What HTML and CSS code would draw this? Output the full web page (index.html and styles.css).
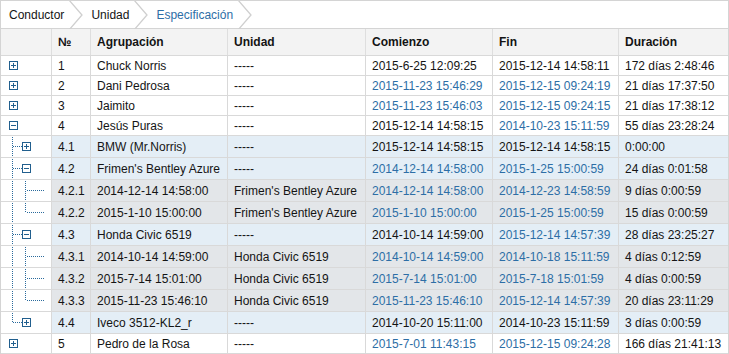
FILE: index.html
```html
<!DOCTYPE html>
<html>
<head>
<meta charset="utf-8">
<link rel="stylesheet" href="styles.css">
</head>
<body>
<div class="widget">
  <div class="crumbs">
    <div class="crumb"><span class="crumb-text">Conductor</span><svg class="chev" width="14" height="28" viewBox="0 0 14 28"><polyline points="0,-1 13,14 0,29"/></svg></div>
    <div class="crumb"><span class="crumb-text">Unidad</span><svg class="chev" width="14" height="28" viewBox="0 0 14 28"><polyline points="0,-1 13,14 0,29"/></svg></div>
    <div class="crumb"><span class="crumb-text active">Especificación</span><svg class="chev" width="14" height="28" viewBox="0 0 14 28"><polyline points="0,-1 13,14 0,29"/></svg></div>
  </div>

  <div class="row head">
    <div class="c"></div><div class="c">№</div><div class="c">Agrupación</div><div class="c">Unidad</div><div class="c">Comienzo</div><div class="c">Fin</div><div class="c">Duración</div>
  </div>

  <div class="row top">
    <div class="c t"><svg class="tree" width="50" height="19"><rect x="8.5" y="5.5" width="8" height="8"/><path class="sign" d="M10 9.5h5M12.5 7v5"/></svg></div>
    <div class="c">1</div><div class="c">Chuck Norris</div><div class="c">-----</div><div class="c">2015-6-25 12:09:25</div><div class="c">2015-12-14 14:58:11</div><div class="c">172 días 2:48:46</div>
  </div>
  <div class="row top">
    <div class="c t"><svg class="tree" width="50" height="19"><rect x="8.5" y="5.5" width="8" height="8"/><path class="sign" d="M10 9.5h5M12.5 7v5"/></svg></div>
    <div class="c">2</div><div class="c">Dani Pedrosa</div><div class="c">-----</div><div class="c b">2015-11-23 15:46:29</div><div class="c b">2015-12-15 09:24:19</div><div class="c">21 días 17:37:50</div>
  </div>
  <div class="row top">
    <div class="c t"><svg class="tree" width="50" height="19"><rect x="8.5" y="5.5" width="8" height="8"/><path class="sign" d="M10 9.5h5M12.5 7v5"/></svg></div>
    <div class="c">3</div><div class="c">Jaimito</div><div class="c">-----</div><div class="c b">2015-11-23 15:46:03</div><div class="c b">2015-12-15 09:24:15</div><div class="c">21 días 17:38:12</div>
  </div>
  <div class="row top">
    <div class="c t"><svg class="tree" width="50" height="19"><rect x="8.5" y="5.5" width="8" height="8"/><path class="sign" d="M10 9.5h5"/></svg></div>
    <div class="c">4</div><div class="c">Jesús Puras</div><div class="c">-----</div><div class="c">2015-12-14 14:58:15</div><div class="c b">2014-10-23 15:11:59</div><div class="c">55 días 23:28:24</div>
  </div>

  <div class="row l2">
    <div class="c t"><svg class="tree" width="50" height="21"><path class="dot" d="M11.5 1v20M12 10.5h9"/><rect x="21.5" y="6.5" width="8" height="8"/><path class="sign" d="M23 10.5h5M25.5 8v5"/></svg></div>
    <div class="c">4.1</div><div class="c">BMW (Mr.Norris)</div><div class="c">-----</div><div class="c">2015-12-14 14:58:15</div><div class="c">2015-12-14 14:58:15</div><div class="c">0:00:00</div>
  </div>
  <div class="row l2">
    <div class="c t"><svg class="tree" width="50" height="21"><path class="dot" d="M11.5 1v20M12 10.5h9"/><rect x="21.5" y="6.5" width="8" height="8"/><path class="sign" d="M23 10.5h5"/></svg></div>
    <div class="c">4.2</div><div class="c">Frimen's Bentley Azure</div><div class="c">-----</div><div class="c b">2014-12-14 14:58:00</div><div class="c b">2015-1-25 15:00:59</div><div class="c">24 días 0:01:58</div>
  </div>
  <div class="row l3">
    <div class="c t"><svg class="tree" width="50" height="21"><path class="dot" d="M11.5 1v20M24.5 1v20M26 10.5h18"/></svg></div>
    <div class="c">4.2.1</div><div class="c">2014-12-14 14:58:00</div><div class="c">Frimen's Bentley Azure</div><div class="c b">2014-12-14 14:58:00</div><div class="c b">2014-12-23 14:58:59</div><div class="c">9 días 0:00:59</div>
  </div>
  <div class="row l3">
    <div class="c t"><svg class="tree" width="50" height="21"><path class="dot" d="M11.5 1v20M24.5 1v10M26 10.5h18"/></svg></div>
    <div class="c">4.2.2</div><div class="c">2015-1-10 15:00:00</div><div class="c">Frimen's Bentley Azure</div><div class="c b">2015-1-10 15:00:00</div><div class="c b">2015-1-25 15:00:59</div><div class="c">15 días 0:00:59</div>
  </div>
  <div class="row l2">
    <div class="c t"><svg class="tree" width="50" height="21"><path class="dot" d="M11.5 1v20M12 10.5h9"/><rect x="21.5" y="6.5" width="8" height="8"/><path class="sign" d="M23 10.5h5"/></svg></div>
    <div class="c">4.3</div><div class="c">Honda Civic 6519</div><div class="c">-----</div><div class="c">2014-10-14 14:59:00</div><div class="c b">2015-12-14 14:57:39</div><div class="c">28 días 23:25:27</div>
  </div>
  <div class="row l3">
    <div class="c t"><svg class="tree" width="50" height="21"><path class="dot" d="M11.5 1v20M24.5 1v20M26 10.5h18"/></svg></div>
    <div class="c">4.3.1</div><div class="c">2014-10-14 14:59:00</div><div class="c">Honda Civic 6519</div><div class="c b">2014-10-14 14:59:00</div><div class="c b">2014-10-18 15:11:59</div><div class="c">4 días 0:12:59</div>
  </div>
  <div class="row l3">
    <div class="c t"><svg class="tree" width="50" height="21"><path class="dot" d="M11.5 1v20M24.5 1v20M26 10.5h18"/></svg></div>
    <div class="c">4.3.2</div><div class="c">2015-7-14 15:01:00</div><div class="c">Honda Civic 6519</div><div class="c b">2015-7-14 15:01:00</div><div class="c b">2015-7-18 15:01:59</div><div class="c">4 días 0:00:59</div>
  </div>
  <div class="row l3">
    <div class="c t"><svg class="tree" width="50" height="21"><path class="dot" d="M11.5 1v20M24.5 1v10M26 10.5h18"/></svg></div>
    <div class="c">4.3.3</div><div class="c">2015-11-23 15:46:10</div><div class="c">Honda Civic 6519</div><div class="c b">2015-11-23 15:46:10</div><div class="c b">2015-12-14 14:57:39</div><div class="c">20 días 23:11:29</div>
  </div>
  <div class="row l2">
    <div class="c t"><svg class="tree" width="50" height="21"><path class="dot" d="M11.5 1v10M12 10.5h9"/><rect x="21.5" y="6.5" width="8" height="8"/><path class="sign" d="M23 10.5h5M25.5 8v5"/></svg></div>
    <div class="c">4.4</div><div class="c">Iveco 3512-KL2_r</div><div class="c">-----</div><div class="c">2014-10-20 15:11:00</div><div class="c">2014-10-23 15:11:59</div><div class="c">3 días 0:00:59</div>
  </div>

  <div class="row top">
    <div class="c t"><svg class="tree" width="50" height="19"><rect x="8.5" y="5.5" width="8" height="8"/><path class="sign" d="M10 9.5h5M12.5 7v5"/></svg></div>
    <div class="c">5</div><div class="c">Pedro de la Rosa</div><div class="c">-----</div><div class="c b">2015-7-01 11:43:15</div><div class="c b">2015-12-15 09:24:28</div><div class="c">166 días 21:41:13</div>
  </div>
</div>
</body>
</html>
```

FILE: styles.css
```css
* { box-sizing: border-box; }

body {
  margin: 0;
  background: #fff;
  font-family: "Liberation Sans", Arial, sans-serif;
  font-size: 12px;
  color: #141414;
}

.widget {
  width: 729px;
  border: 1px solid #d4d4d4;
  border-bottom: none;
}

.crumbs {
  display: flex;
  height: 28px;
  border-bottom: 1px solid #d4d4d4;
}

.crumb {
  display: flex;
  align-items: center;
}

.crumb-text {
  padding-left: 8px;
  margin-right: 5px;
  color: #141414;
}

.crumb-text.active { color: #2d6ea6; }

.chev { display: block; }
.chev polyline {
  fill: none;
  stroke: #cfcfcf;
  stroke-width: 1.3;
}

.row {
  display: grid;
  grid-template-columns: 51px 39px 137px 138px 127px 126px 109px;
  border-bottom: 1px solid #d9d9d9;
}

.row.head {
  height: 27px;
  background: #f3f3f3;
  font-weight: bold;
}

.row.top { height: 20px; background: #fff; }
.row.l2 { height: 22px; background: #e4eef6; }
.row.l3 { height: 22px; background: #e3e6e9; }

.c {
  display: flex;
  align-items: center;
  padding: 0 6px;
  white-space: nowrap;
  overflow: hidden;
  border-right: 1px solid #d9d9d9;
}

.c:last-child { border-right: none; }

.head .c { border-right-color: #dedede; }

.c.b { color: #2d6ea6; }

.c.t {
  padding: 0;
  background: #fff;
  align-items: flex-start;
}

.tree { display: block; }
.tree rect { fill: #fff; stroke: #215f8e; stroke-width: 1; }
.tree .sign { fill: none; stroke: #215f8e; stroke-width: 1; }
.tree .dot { fill: none; stroke: #2a6a9c; stroke-width: 1; stroke-dasharray: 1 1; }
```
